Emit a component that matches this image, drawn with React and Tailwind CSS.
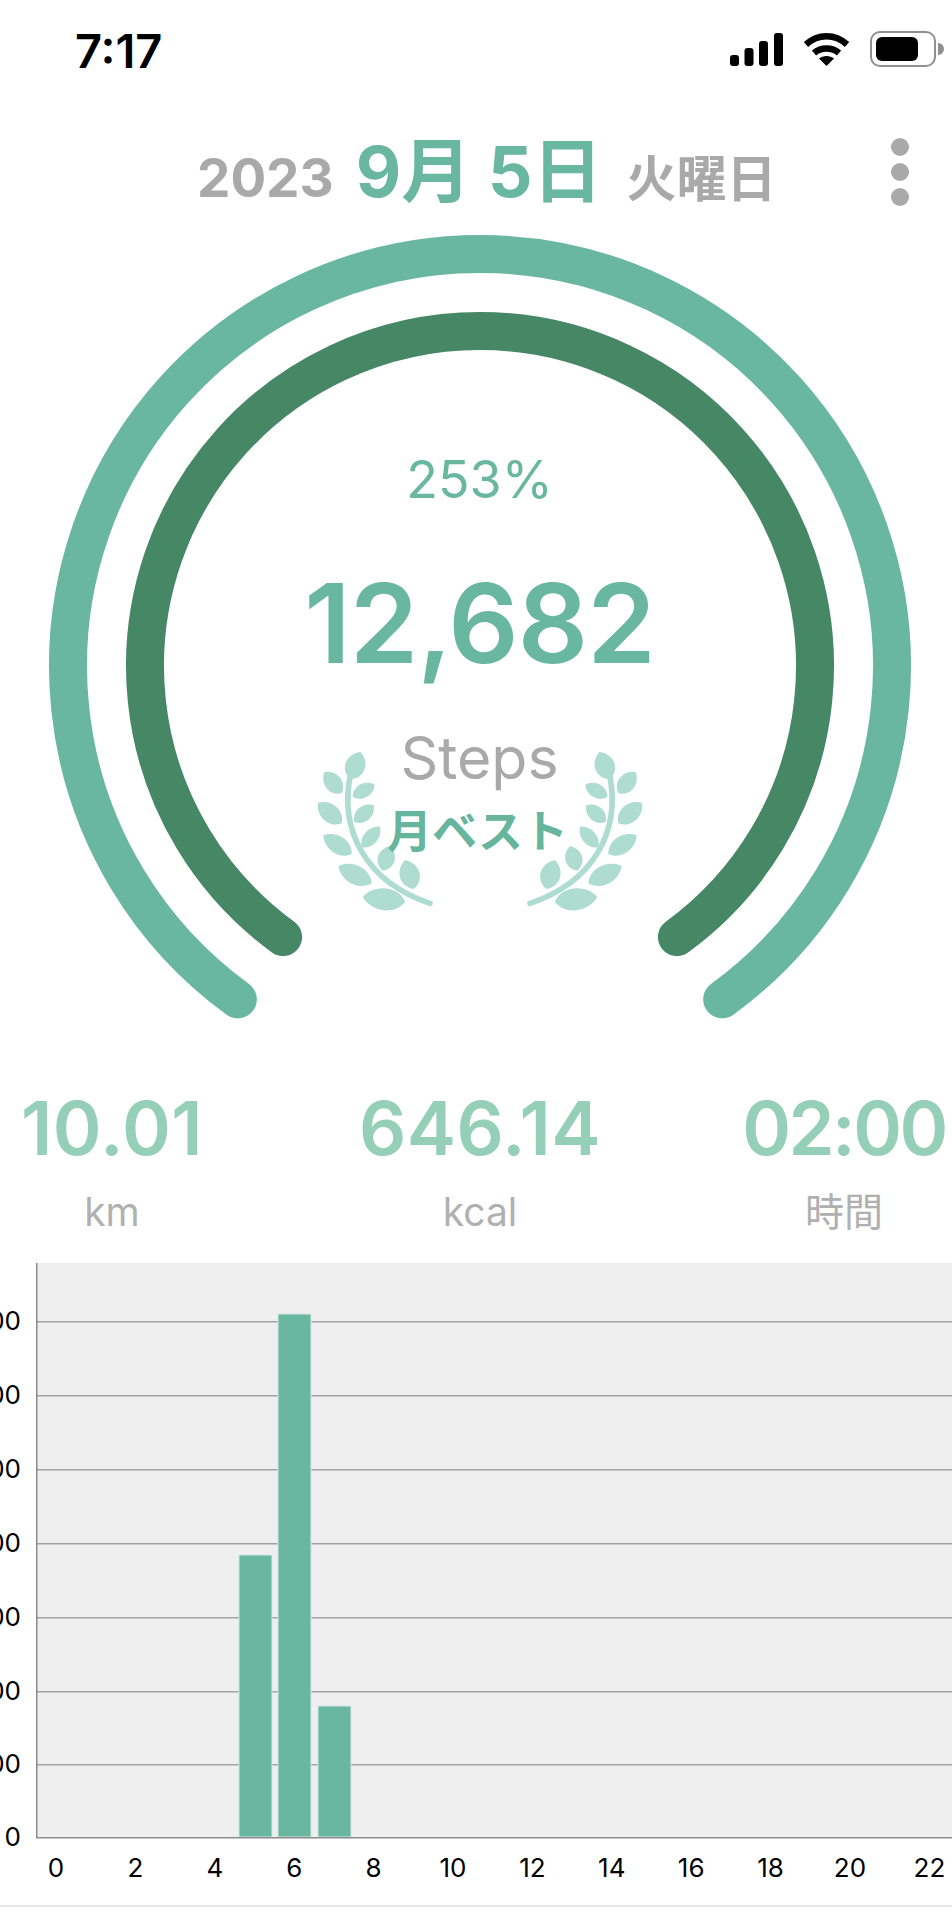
const SANS = "font-['Inter','Noto_Sans_CJK_JP',sans-serif]";

function arc(r) {
  const a = (54 * Math.PI) / 180;
  const dx = r * Math.cos(a);
  const dy = r * Math.sin(a);
  return `M ${480 - dx} ${446 + dy} A ${r} ${r} 0 1 1 ${480 + dx} ${446 + dy}`;
}

function leaf([bx, by, tx, ty, w]) {
  const mx = tx - bx;
  const my = ty - by;
  const len = Math.hypot(mx, my);
  const nx = (-my / len) * w;
  const ny = (mx / len) * w;
  const c = (t, s) => `${bx + mx * t + nx * s} ${by + my * t + ny * s}`;
  return `M ${bx} ${by} C ${c(0.2, 1)} ${c(0.75, 1)} ${tx} ${ty} C ${c(0.75, -1)} ${c(0.2, -1)} ${bx} ${by} Z`;
}

const LEAVES = [
  [180, 178, 212, 96, 40],
  [155, 220, 103, 156, 34],
  [188, 230, 254, 194, 28],
  [155, 310, 84, 248, 36],
  [193, 306, 252, 256, 30],
  [185, 402, 100, 346, 35],
  [216, 382, 270, 320, 28],
  [245, 490, 145, 438, 38],
  [278, 452, 300, 378, 34],
  [372, 507, 345, 420, 40],
  [346, 545, 218, 530, 44],
];

function Laurel() {
  return (
    <svg viewBox="0 0 1110 630" className="absolute left-[290px] top-[500px] w-[370px] h-[210px]" fill="#aeddcf">
      {[0, 1].map((m) => (
        <g key={m} transform={m ? "matrix(-1 0 0 1 1140 0)" : undefined}>
          {LEAVES.map((l, i) => (
            <path key={i} d={leaf(l)} />
          ))}
          <path d="M 180 170 C 150 330 225 485 420 550" fill="none" stroke="#aeddcf" strokeWidth="17" strokeLinecap="round" />
        </g>
      ))}
    </svg>
  );
}

function Gauge() {
  return (
    <div className="relative h-[820px] w-full">
      <svg viewBox="0 0 952 820" className="block w-full h-full" fill="none">
        <path d={arc(412)} stroke="#69b79f" strokeWidth="38" strokeLinecap="round" />
        <path d={arc(335)} stroke="#468765" strokeWidth="38" strokeLinecap="round" />
      </svg>
      <Laurel />
      <div className="absolute inset-x-0 top-[230px] pl-[7px] flex flex-col items-center">
        <div className="text-[52px] leading-[60px] text-[#69b79f]">253%</div>
        <div className="mt-[49px] text-[110px] leading-[128px] font-semibold text-[#69b79f] tracking-[-1px]">12,682</div>
        <div className="mt-[36px] text-[59px] leading-[70px] text-[#a9a9a9]">Steps</div>
        <div className="mt-[12px] pr-[4px] text-[45px] leading-[54px] font-semibold text-[#66b59c]">月ベスト</div>
      </div>
    </div>
  );
}

function Stat({ value, label, track = "tracking-[0.5px]" }) {
  return (
    <div className="flex flex-col items-center">
      <div className={`text-[74px] leading-[90px] font-semibold text-[#95cfba] whitespace-nowrap ${track}`}>{value}</div>
      <div className="mt-[16px] text-[39px] leading-[46px] text-[#b0b0b0]">{label}</div>
    </div>
  );
}

function Chart() {
  const base = 574;
  const grids = [58, 132, 206, 280, 354, 428, 501];
  const yLabels = ["700", "600", "500", "400", "300", "200", "100"];
  const bars = [
    [239, 282],
    [278, 523],
    [318, 131],
  ];
  const font = "Inter, 'Noto Sans CJK JP', sans-serif";
  return (
    <svg viewBox="0 0 952 630" className="block w-full h-[630px]">
      <rect x="37" y="0" width="915" height={base} fill="#efefef" />
      {grids.map((y) => (
        <rect key={y} x="37" y={y} width="915" height="1.5" fill="#a3a3a3" />
      ))}
      {bars.map(([x, h]) => (
        <rect key={x} x={x} y={base - h} width="33" height={h} fill="#69b79f" stroke="#d3eae1" strokeWidth="1" />
      ))}
      <rect x="36" y="0" width="1.5" height={base + 1} fill="#8c8c8c" />
      <rect x="36" y={base} width="916" height="1.5" fill="#8c8c8c" />
      {grids.map((y, i) => (
        <text key={y} x="21" y={y + 9} textAnchor="end" fontSize="26" fontFamily={font} fill="#000">
          {yLabels[i]}
        </text>
      ))}
      <text x="21" y={base + 9} textAnchor="end" fontSize="26" fontFamily={font} fill="#000">
        0
      </text>
      {[0, 2, 4, 6, 8, 10, 12, 14, 16, 18, 20, 22].map((h) => (
        <text key={h} x={56 + h * 39.7} y={base + 40} textAnchor="middle" fontSize="26" fontFamily={font} fill="#000">
          {h}
        </text>
      ))}
    </svg>
  );
}

function StatusIcons() {
  return (
    <div className="flex items-center gap-[20px]">
      <svg width="53" height="33" viewBox="0 0 53 33" fill="#000">
        <rect x="0" y="22" width="9" height="11" rx="3" />
        <rect x="14.5" y="15" width="9" height="18" rx="3" />
        <rect x="29" y="8" width="9" height="25" rx="3" />
        <rect x="44" y="0" width="9" height="33" rx="3" />
      </svg>
      <svg width="47" height="33" viewBox="0 0 47 33" fill="none" stroke="#000" strokeWidth="6.5">
        <path d="M 3 11.5 C 15 0.5 32 0.5 44 11.5" />
        <path d="M 11 20 C 18 14 29 14 36 20" />
        <path d="M 23.5 33 L 16 25.5 C 20 22 27 22 31 25.5 Z" fill="#000" stroke="none" />
      </svg>
      <div className="flex items-center">
        <div className="w-[66px] h-[36px] rounded-[10px] border-2 border-[#8f8f8f] p-[4px] pr-[16px]">
          <div className="w-full h-full rounded-[6px] bg-black" />
        </div>
        <div className="ml-[2px] w-[6px] h-[12px] rounded-r-full bg-[#8f8f8f]" />
      </div>
    </div>
  );
}

export default function App() {
  return (
    <div className={`w-[952px] h-[1920px] overflow-hidden bg-white ${SANS}`}>
      <div className="h-[100px] flex items-start justify-between pt-[33px] pl-[75px] pr-[8px]">
        <div className="text-[47px] leading-[36px] font-semibold text-black">7:17</div>
        <div className="-mt-[2px]"><StatusIcons /></div>
      </div>
      <div className="h-[120px] flex items-baseline pl-[197px] pr-[43px] pt-[32px] relative">
        <span className="text-[53px] leading-[80px] font-bold text-[#a9a9a9]">2023</span>
        <span className="ml-[22px] text-[70px] leading-[80px] font-bold text-[#69b79f] whitespace-nowrap">9月 5日</span>
        <span className="ml-[24px] text-[50px] leading-[80px] font-semibold text-[#a9a9a9]">火曜日</span>
        <div className="ml-auto self-start mt-[6px] flex flex-col gap-[7px]">
          <div className="w-[18px] h-[18px] rounded-full bg-[#a9a9a9]" />
          <div className="w-[18px] h-[18px] rounded-full bg-[#a9a9a9]" />
          <div className="w-[18px] h-[18px] rounded-full bg-[#a9a9a9]" />
        </div>
      </div>
      <Gauge />
      <div className="mt-[43px] h-[180px] grid grid-cols-[224px_512px_216px]">
        <Stat value="10.01" label="km" />
        <Stat value="646.14" label="kcal" />
        <Stat value="02:00" label="時間" track="tracking-[-2.5px]" />
      </div>
      <Chart />
      <div className="mt-[12px] h-[2px] bg-[#e6e6e6]" />
    </div>
  );
}
